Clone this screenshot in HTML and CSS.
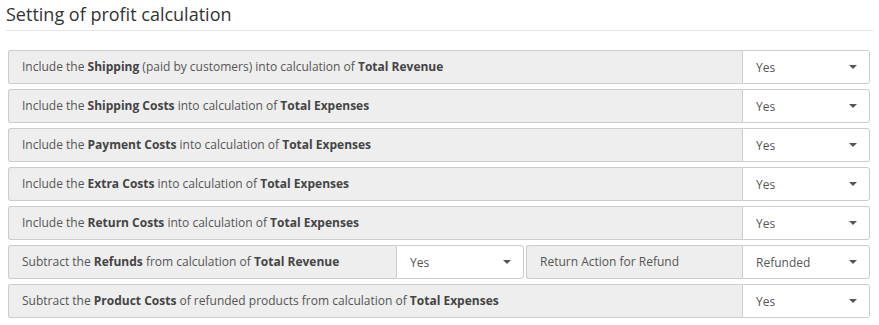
FILE: index.html
```html
<!DOCTYPE html>
<html>
    <head>
        <title>Profit Settings</title>
        <link rel="stylesheet" href="styles.css">
    </head>
    <body>
        <div class="container">
            <h3 class="title">Setting of profit calculation</h3>

            <div class="settings">
                <div class="row">
                    <div class="label">Include the <b>Shipping</b> (paid by customers) into calculation of <b>Total Revenue</b></div>
                    <div class="select">Yes<span class="caret"></span></div>
                </div>
                <div class="row">
                    <div class="label">Include the <b>Shipping Costs</b> into calculation of <b>Total Expenses</b></div>
                    <div class="select">Yes<span class="caret"></span></div>
                </div>
                <div class="row">
                    <div class="label">Include the <b>Payment Costs</b> into calculation of <b>Total Expenses</b></div>
                    <div class="select">Yes<span class="caret"></span></div>
                </div>
                <div class="row">
                    <div class="label">Include the <b>Extra Costs</b> into calculation of <b>Total Expenses</b></div>
                    <div class="select">Yes<span class="caret"></span></div>
                </div>
                <div class="row">
                    <div class="label">Include the <b>Return Costs</b> into calculation of <b>Total Expenses</b></div>
                    <div class="select">Yes<span class="caret"></span></div>
                </div>
                <div class="row">
                    <div class="label">Subtract the <b>Refunds</b> from calculation of <b>Total Revenue</b></div>
                    <div class="select select-mid">Yes<span class="caret"></span></div>
                    <div class="label label-top">Return Action for Refund</div>
                    <div class="select">Refunded<span class="caret"></span></div>
                </div>
                <div class="row">
                    <div class="label">Subtract the <b>Product Costs</b> of refunded products from calculation of <b>Total Expenses</b></div>
                    <div class="select">Yes<span class="caret"></span></div>
                </div>
            </div>
        </div>
    </body>
</html>
```

FILE: styles.css
```css
body{
    margin: 0;
    font-family: "Open Sans", sans-serif;
    color: #555;
    background-color: #fff;
}
.container{
    padding: 0 6px;
}
.title{
    margin: 0;
    padding-top: 1px;
    font-size: 18px;
    font-weight: normal;
    color: #333;
    line-height: 26px;
    border-bottom: 1px solid #e5e5e5;
    padding-bottom: 3px;
}
.settings{
    padding: 19px 3px 0 2px;
    display: flex;
    flex-direction: column;
    gap: 5px;
}
.row{
    display: flex;
    height: 34px;
}
.label{
    flex: 1;
    box-sizing: border-box;
    background-color: #eee;
    border: 1px solid #ccc;
    border-right: none;
    border-radius: 3px 0 0 3px;
    padding: 0 13px;
    font-size: 12px;
    line-height: 31px;
    white-space: nowrap;
}
.label b{
    color: #444;
}
.label-top{
    line-height: 16px;
    padding-top: 8px;
    margin-left: 2px;
    border-left: 1px solid #ccc;
    flex: 0 0 216px;
}
.select{
    flex: 0 0 128px;
    box-sizing: border-box;
    border: 1px solid #ccc;
    border-radius: 0 3px 3px 0;
    background-color: #fff;
    padding: 0 13px;
    font-size: 12px;
    display: flex;
    align-items: center;
    justify-content: space-between;
}
.caret{
    width: 0;
    height: 0;
    border-left: 4px solid transparent;
    border-right: 4px solid transparent;
    border-top: 4px solid #555;
    margin-right: -1px;
}
```
